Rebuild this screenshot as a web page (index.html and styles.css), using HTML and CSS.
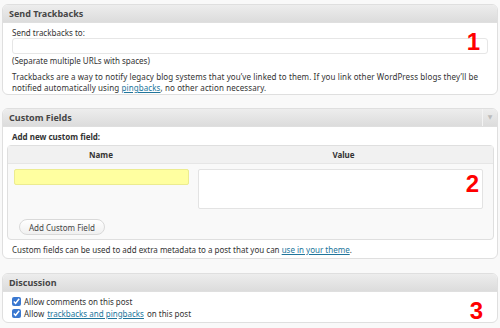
FILE: index.html
```html
<!DOCTYPE html>
<html lang="en">
<head>
  <meta charset="UTF-8">
  <meta name="viewport" content="width=device-width, initial-scale=1.0">
  <title>Post options</title>
  <link rel="stylesheet" href="styles.css">
</head>
<body>
  <!-- Trackbacks -->
  <div class="postbox">
    <h3 class="box-title">Send Trackbacks</h3>
    <div class="inside">
      <label class="field-label" for="trackback">Send trackbacks to:</label>
      <input type="text" id="trackback" class="wide-input">
      <div class="hint">(Separate multiple URLs with spaces)</div>
      <p class="note">Trackbacks are a way to notify legacy blog systems that you’ve linked to them. If you link other WordPress blogs they’ll be notified automatically using <a href="#">pingbacks</a>, no other action necessary.</p>
    </div>
    <span class="marker marker-1">1</span>
  </div>

  <!-- Custom fields -->
  <div class="postbox">
    <h3 class="box-title">Custom Fields <span class="toggle">▼</span></h3>
    <div class="inside">
      <div class="field-label strong">Add new custom field:</div>
      <div class="meta-table">
        <div class="meta-head">
          <div>Name</div>
          <div>Value</div>
        </div>
        <div class="meta-row">
          <input type="text" class="meta-key">
          <textarea class="meta-value"></textarea>
        </div>
        <div class="meta-submit">
          <button class="button">Add Custom Field</button>
        </div>
      </div>
      <p class="note">Custom fields can be used to add extra metadata to a post that you can <a href="#">use in your theme</a>.</p>
    </div>
    <span class="marker marker-2">2</span>
  </div>

  <!-- Discussion -->
  <div class="postbox">
    <h3 class="box-title">Discussion</h3>
    <div class="inside">
      <label class="check"><input type="checkbox" checked> Allow comments on this post</label>
      <label class="check"><input type="checkbox" checked> Allow <a href="#">trackbacks and pingbacks</a> on this post</label>
    </div>
    <span class="marker marker-3">3</span>
  </div>
</body>
</html>
```

FILE: styles.css
```css
body {
  margin: 0;
  padding: 4px 2px 0 2px;
  background-color: #f9f9f9;
  color: #333;
  font-family: "Noto Sans", "DejaVu Sans", sans-serif;
  font-size: 8px;
  line-height: 11px;
}

a {
  color: #21759b;
}

.postbox {
  position: relative;
  background-color: #fff;
  border: 1px solid #dfdfdf;
  border-radius: 6px;
  margin-bottom: 13px;
  overflow: hidden;
}

.box-title {
  margin: 0;
  height: 17px;
  padding-left: 6px;
  font-size: 9px;
  line-height: 17px;
  font-weight: bold;
  color: #464646;
  background: linear-gradient(#ededed, #dcdcdc);
  border-bottom: 1px solid #dfdfdf;
  position: relative;
}

.toggle {
  position: absolute;
  right: 0;
  top: 0;
  width: 14px;
  height: 17px;
  border-left: 1px solid #f3f3f3;
  color: #bbb;
  font-size: 6px;
  text-align: center;
  font-weight: normal;
}

.inside {
  padding: 4px 9px 1px 9px;
}

.field-label {
  display: block;
}

.strong {
  font-weight: bold;
  padding-bottom: 3px;
}

.wide-input {
  display: block;
  box-sizing: border-box;
  width: 100%;
  height: 16px;
  margin: 0;
  border: 1px solid #e6e6e6;
  border-radius: 3px;
  background: #fff;
}

.hint {
  margin-top: 1px;
}

.note {
  margin: 5px 0 0 0;
  letter-spacing: 0.1px;
}

.meta-table {
  margin: 0 -6px 0 -5px;
  border: 1px solid #dfdfdf;
  border-radius: 4px;
  background-color: #f9f9f9;
}

.meta-head {
  display: grid;
  grid-template-columns: 186px 1fr;
  height: 17px;
  line-height: 17px;
  background-color: #f1f1f1;
  border-bottom: 1px solid #e6e6e6;
  font-weight: bold;
  text-align: center;
}

.meta-row {
  display: grid;
  grid-template-columns: 186px 1fr;
  padding-top: 5px;
}

.meta-key {
  box-sizing: border-box;
  width: 175px;
  height: 16px;
  margin: 0 0 0 6px;
  border: 1px solid #ecec90;
  border-radius: 2px;
  background-color: #ffffa0;
}

.meta-value {
  box-sizing: border-box;
  height: 40px;
  margin: 0 10px 0 4px;
  border: 1px solid #e3e3e3;
  border-radius: 2px;
  background: #fff;
  resize: none;
}

.meta-submit {
  padding: 10px 0 4px 11px;
}

.button {
  display: block;
  height: 16px;
  padding: 0 9px;
  border: 1px solid #d9d9d9;
  border-radius: 9px;
  background: linear-gradient(#fff, #f0f0f0);
  font-family: "Noto Sans", "DejaVu Sans", sans-serif;
  font-size: 8px;
  color: #464646;
}

.postbox .meta-table + .note {
  margin-top: 4px;
  padding-bottom: 2px;
  letter-spacing: 0;
}

.check {
  display: flex;
  align-items: center;
  gap: 3px;
  height: 12px;
}

.check input {
  margin: 0;
  width: 9px;
  height: 9px;
  accent-color: #3a78d0;
}

.postbox:last-child {
  margin-top: 14px;
}

.postbox:last-child .inside {
  padding-top: 3px;
  padding-bottom: 3px;
}

/* numbered annotations */
.marker {
  position: absolute;
  font-family: "Liberation Sans", Arial, sans-serif;
  font-weight: bold;
  font-size: 24px;
  line-height: 24px;
  color: #f00;
}

.marker-1 { top: 25px; right: 17px; }
.marker-2 { top: 63px; right: 18px; }
.marker-3 { top: 25px; right: 14px; }
```
